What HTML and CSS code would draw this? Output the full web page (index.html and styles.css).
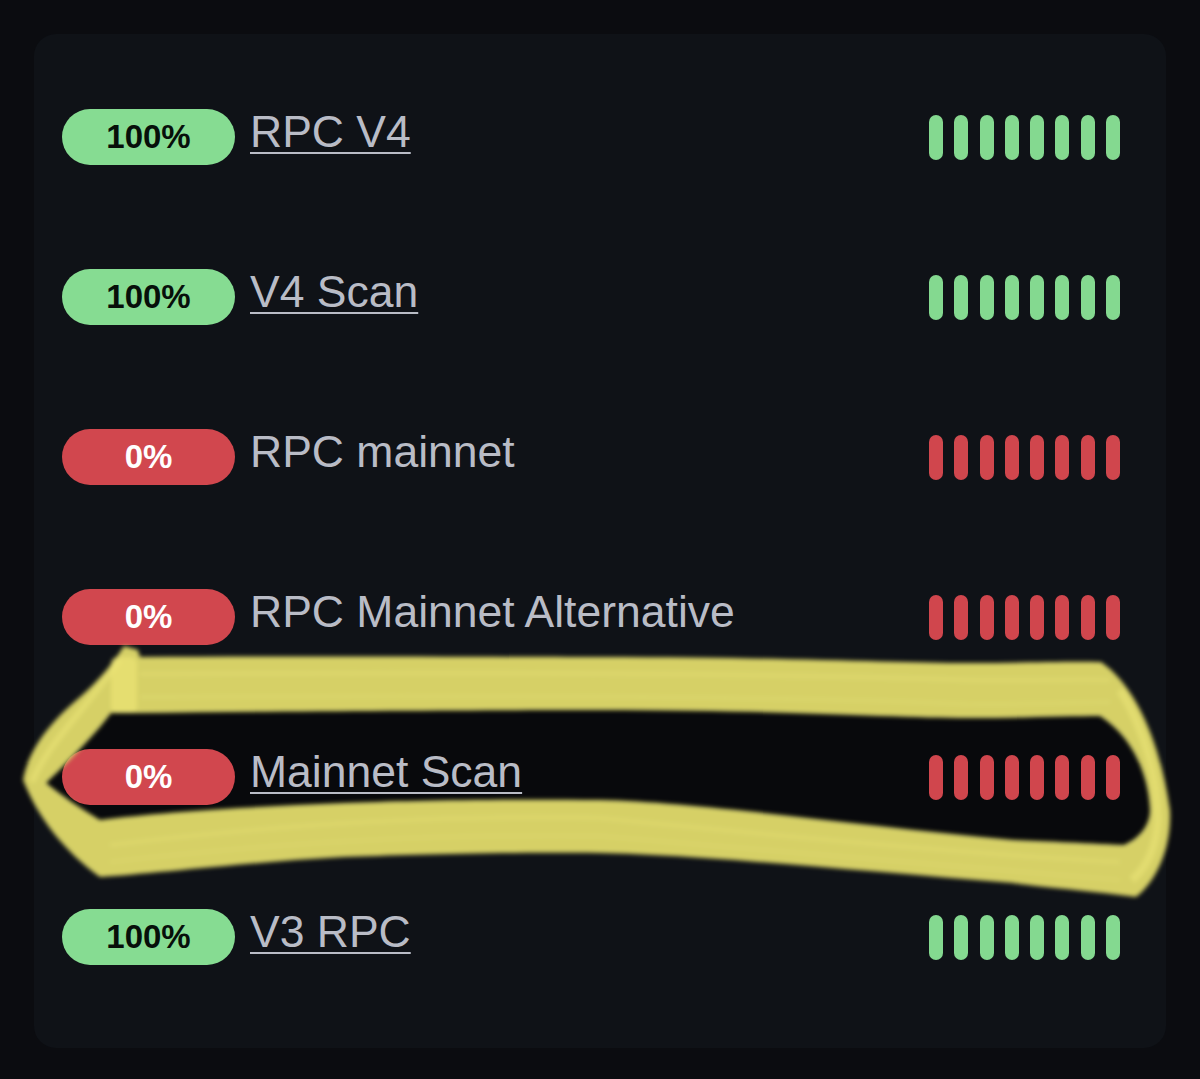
FILE: index.html
```html
<!doctype html>
<html>

<head>
    <title>Status</title>
    <link rel="stylesheet" href="styles.css">
</head>

<body>
    <div class="card">
        <!-- darker patch inside the scribble, sits behind the rows -->
        <svg class="shade" width="1200" height="1079" viewBox="0 0 1200 1079">
            <path fill="#000" fill-opacity="0.45" d="M 46 783 C 60 770, 95 735, 111 713 L 136 713 C 300 711, 500 710, 600 710 C 780 710, 900 718, 967 718 C 1020 718, 1070 716, 1100 716 C 1130 735, 1148 770, 1150 810 C 1150 825, 1140 838, 1124 845 C 1080 843, 1040 841, 1013 840 C 850 825, 700 802, 600 800 C 480 799, 400 801, 344 803 C 260 806, 150 815, 97 823 C 80 810, 60 795, 46 783 Z" />
        </svg>
        <div class="row">
            <span class="badge up">100%</span>
            <a class="name" href="#">RPC V4</a>
            <div class="bars up"><i></i><i></i><i></i><i></i><i></i><i></i><i></i><i></i></div>
        </div>
        <div class="row">
            <span class="badge up">100%</span>
            <a class="name" href="#">V4 Scan</a>
            <div class="bars up"><i></i><i></i><i></i><i></i><i></i><i></i><i></i><i></i></div>
        </div>
        <div class="row">
            <span class="badge down">0%</span>
            <span class="name">RPC mainnet</span>
            <div class="bars down"><i></i><i></i><i></i><i></i><i></i><i></i><i></i><i></i></div>
        </div>
        <div class="row">
            <span class="badge down">0%</span>
            <span class="name">RPC Mainnet Alternative</span>
            <div class="bars down"><i></i><i></i><i></i><i></i><i></i><i></i><i></i><i></i></div>
        </div>
        <div class="row">
            <span class="badge down">0%</span>
            <a class="name" href="#">Mainnet Scan</a>
            <div class="bars down"><i></i><i></i><i></i><i></i><i></i><i></i><i></i><i></i></div>
        </div>
        <div class="row">
            <span class="badge up">100%</span>
            <a class="name" href="#">V3 RPC</a>
            <div class="bars up"><i></i><i></i><i></i><i></i><i></i><i></i><i></i><i></i></div>
        </div>
    </div>

    <!-- highlighter scribble drawn over the page -->
    <svg class="marker" width="1200" height="1079" viewBox="0 0 1200 1079">
        <defs>
            <filter id="soft" x="-5%" y="-5%" width="110%" height="110%">
                <feGaussianBlur stdDeviation="2" />
            </filter>
        </defs>
        <g filter="url(#soft)">
            <path fill="#d6d066" fill-rule="evenodd" d="M 23 780 C 28 750, 50 722, 80 697 C 100 680, 115 660, 124 646 L 138 650 L 140 657 C 300 656, 500 657, 600 657 C 780 657, 900 663, 967 663 C 1020 663, 1070 661, 1101 662 C 1135 685, 1160 740, 1170 810 C 1172 845, 1158 880, 1136 897 C 1080 890, 1030 886, 1013 883 C 850 870, 700 855, 600 853 C 480 852, 400 855, 344 857 C 250 862, 150 874, 100 877 C 65 852, 38 818, 23 780 Z M 46 783 C 62 768, 95 735, 111 713 L 136 713 C 300 711, 500 710, 600 710 C 780 710, 900 718, 967 718 C 1020 718, 1070 716, 1100 716 C 1130 735, 1148 770, 1150 810 C 1150 825, 1140 838, 1124 845 C 1080 843, 1040 841, 1013 840 C 850 825, 700 802, 600 800 C 480 799, 400 801, 344 803 C 260 806, 160 812, 100 820 C 80 808, 62 796, 46 783 Z" />
            <rect x="111" y="657" width="26" height="56" rx="6" fill="#eee877" fill-opacity="0.6" />
            <path fill="none" stroke="#e2dc71" stroke-opacity="0.5" stroke-width="5" d="M 140 674 C 500 672, 800 674, 967 680 C 1030 681, 1080 679, 1110 680" />
            <path fill="none" stroke="#e2dc71" stroke-opacity="0.4" stroke-width="4" d="M 140 697 C 500 695, 800 697, 967 704 C 1030 705, 1080 702, 1110 702" />
            <path fill="none" stroke="#eae475" stroke-opacity="0.6" stroke-width="8" d="M 1120 690 C 1145 730, 1158 780, 1158 820 C 1156 850, 1146 868, 1132 880" />
            <path fill="none" stroke="#e2dc71" stroke-opacity="0.45" stroke-width="5" d="M 1120 862 C 1040 858, 900 848, 600 818 C 450 815, 300 822, 110 845" />
            <path fill="none" stroke="#e2dc71" stroke-opacity="0.35" stroke-width="4" d="M 1120 880 C 1040 872, 900 862, 600 836 C 450 834, 300 840, 110 862" />
            <path fill="none" stroke="#ece676" stroke-opacity="0.55" stroke-width="6" d="M 32 782 C 47 745, 80 715, 120 660" />
        </g>
    </svg>
</body>
</html>
```

FILE: styles.css
```css
body {
    margin: 0;
    padding: 34px;
    background: #0b0c10;
    font-family: "Liberation Sans", Arial, sans-serif;
    position: relative;
}

/* Status card */
.card {
    position: relative;
    background-color: #0f1217;
    border-radius: 22px;
    padding: 23px 46px 31px 28px;
}

.shade {
    position: absolute;
    top: -34px;
    left: -34px;
}

.row {
    position: relative;
    height: 160px;
    display: flex;
    align-items: center;
}

/* Uptime badge */
.badge {
    width: 173px;
    height: 56px;
    border-radius: 28px;
    display: flex;
    align-items: center;
    justify-content: center;
    font-size: 33px;
    font-weight: bold;
    margin-right: 15px;
}

.badge.up {
    background-color: #86dc92;
    color: #07100a;
}

.badge.down {
    background-color: #d1474e;
    color: #ffffff;
}

/* Service name */
.name {
    color: #b9bcc6;
    font-size: 44.5px;
    line-height: 44px;
    margin-bottom: 10px;
    text-decoration: none;
}

a.name {
    text-decoration: underline;
    text-decoration-thickness: 2px;
    text-underline-offset: 5px;
}

/* History bars */
.bars {
    margin-left: auto;
    display: flex;
    gap: 11.3px;
}

.bars i {
    display: block;
    width: 14px;
    height: 45px;
    border-radius: 7px;
}

.bars.up i {
    background-color: #84d990;
}

.bars.down i {
    background-color: #d0464d;
}

/* Highlighter overlay */
.marker {
    position: absolute;
    top: 0;
    left: 0;
    pointer-events: none;
}
```
